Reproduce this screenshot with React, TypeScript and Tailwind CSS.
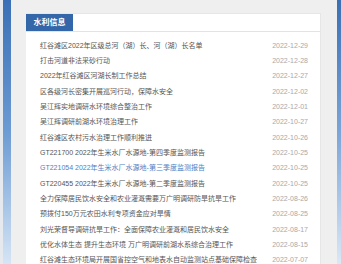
import React from 'react';

const items = [
  { title: '红谷滩区2022年区级总河（湖）长、河（湖）长名单', date: '2022-12-29' },
  { title: '打击河道非法采砂行动', date: '2022-12-28' },
  { title: '2022年红谷滩区河湖长制工作总结', date: '2022-12-27' },
  { title: '区各级河长密集开展巡河行动，保障水安全', date: '2022-12-02' },
  { title: '吴江辉实地调研水环境综合整治工作', date: '2022-12-01' },
  { title: '吴江辉调研前湖水环境治理工作', date: '2022-10-27' },
  { title: '红谷滩区农村污水治理工作顺利推进', date: '2022-10-26' },
  { title: 'GT221700 2022年生米水厂水源地-第四季度监测报告', date: '2022-10-25' },
  { title: 'GT221054 2022年生米水厂水源地-第三季度监测报告', date: '2022-10-25', active: true },
  { title: 'GT220455 2022年生米水厂水源地-第二季度监测报告', date: '2022-10-25' },
  { title: '全力保障居民饮水安全和农业灌溉需要万广明调研防旱抗旱工作', date: '2022-08-26' },
  { title: '预拨付150万元农田水利专项资金应对旱情', date: '2022-08-25' },
  { title: '刘光荣督导调研抗旱工作：全面保障农业灌溉和居民饮水安全', date: '2022-08-17' },
  { title: '优化水体生态 提升生态环境 万广明调研前湖水系综合治理工作', date: '2022-08-15' },
  { title: '红谷滩生态环境局开展国省控空气和地表水自动监测站点基础保障检查', date: '2022-07-07' },
];

const App: React.FC = () => {
  return (
    <div
      className="flex h-[264px] w-[341px] overflow-hidden bg-[#efefef]"
      style={{ fontFamily: '"Liberation Sans", "Noto Sans CJK SC", sans-serif' }}
    >
      {/* left edge */}
      <div className="w-[3px] shrink-0 bg-[#e6e9ee]"></div>
      <div className="w-[8px] shrink-0 bg-gradient-to-b from-[#3a70b6] via-[#6d9bd3] to-[#d6e5f5]"></div>

      {/* main */}
      <div className="flex-1 pl-[15px] pr-[16px] pt-[13px]">
        <div className="h-[251px] bg-white border border-b-0 border-l-0 border-[#e6e6e6] overflow-hidden">
          <div className="flex h-[18px] border-b border-[#e3e3e3]">
            <div className="flex w-[47px] items-center justify-center bg-[#3467aa] text-[8px] font-bold text-white">
              水利信息
            </div>
          </div>
          <ul className="pl-[14px] pr-[12px] pt-[5.5px]">
            {items.map((it, i) => (
              <li key={i} className="flex h-[15.33px] items-center justify-between text-[7px] leading-none">
                <span className={it.active ? 'text-[#4d82c4]' : 'text-[#555]'}>{it.title}</span>
                <span className="text-[#a8a8a8]">{it.date}</span>
              </li>
            ))}
          </ul>
        </div>
      </div>

      {/* right edge */}
      <div className="w-[4px] shrink-0 bg-gradient-to-b from-[#3a70b6] via-[#7aa5d8] to-[#dbe8f6]"></div>
    </div>
  );
};

export default App;
